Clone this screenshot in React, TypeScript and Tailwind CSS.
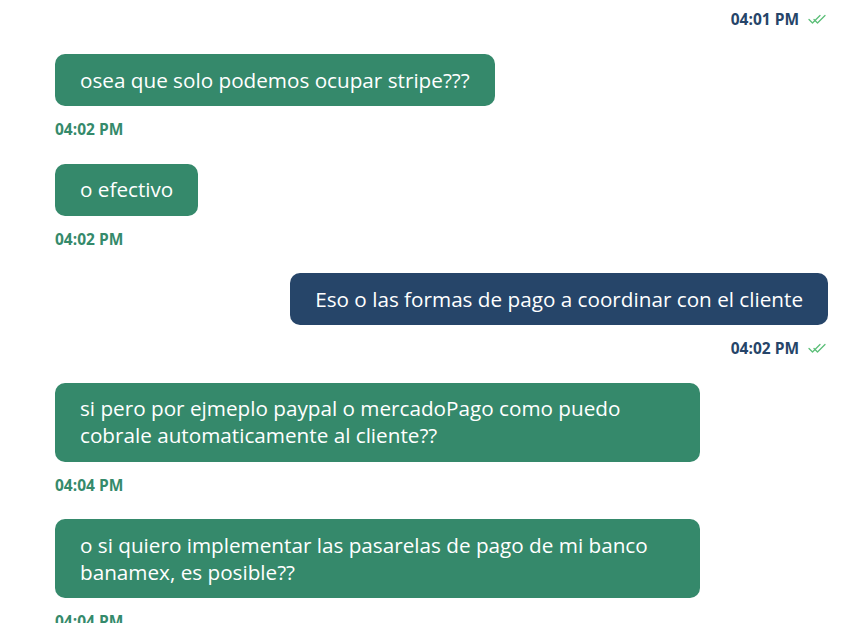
import React from "react";

type Msg = { text: string; time: string; mine: boolean };

const msgs: Msg[] = [
  { text: "osea que solo podemos ocupar stripe???", time: "04:02 PM", mine: false },
  { text: "o efectivo", time: "04:02 PM", mine: false },
  { text: "Eso o las formas de pago a coordinar con el cliente", time: "04:02 PM", mine: true },
  {
    text: "si pero por ejmeplo paypal o mercadoPago como puedo cobrale automaticamente al cliente??",
    time: "04:04 PM",
    mine: false,
  },
  {
    text: "o si quiero implementar las pasarelas de pago de mi banco banamex, es posible??",
    time: "04:04 PM",
    mine: false,
  },
];

function Checks() {
  return (
    <svg width="20" height="14" viewBox="0 0 20 14" fill="none" stroke="#5cbf78" strokeWidth="1.3" strokeLinecap="round" strokeLinejoin="round">
      <path d="M1 7.5 L4.5 11 L12 3.5" />
      <path d="M6 7.5 L9.5 11 L17 3.5" />
    </svg>
  );
}

function Time({ time, mine }: { time: string; mine: boolean }) {
  return (
    <div className={`flex items-center h-4 gap-[9px] ${mine ? "justify-end text-[#264569]" : "justify-start text-[#358a6b]"}`}>
      <span className="text-[15.5px] font-bold leading-4">{time}</span>
      {mine && <Checks />}
    </div>
  );
}

export default function App() {
  return (
    <div
      className="w-[857px] h-[623px] overflow-hidden bg-white pl-[55px] pr-[29px] pt-[11px]"
      style={{ fontFamily: "'Open Sans', sans-serif" }}
    >
      <div className="mb-[27px]">
        <Time time="04:01 PM" mine={true} />
      </div>
      {msgs.map((m, i) => (
        <div key={i} className="mb-[26.5px]">
          <div className={`flex ${m.mine ? "justify-end" : "justify-start"}`}>
            <div
              className={`max-w-[645px] rounded-[10px] px-[25px] py-[12.5px] text-white text-[20.7px] leading-[27px] ${
                m.mine ? "bg-[#264569]" : "bg-[#35896b]"
              }`}
            >
              {m.text}
            </div>
          </div>
          <div className="mt-[15px]">
            <Time time={m.time} mine={m.mine} />
          </div>
        </div>
      ))}
    </div>
  );
}
